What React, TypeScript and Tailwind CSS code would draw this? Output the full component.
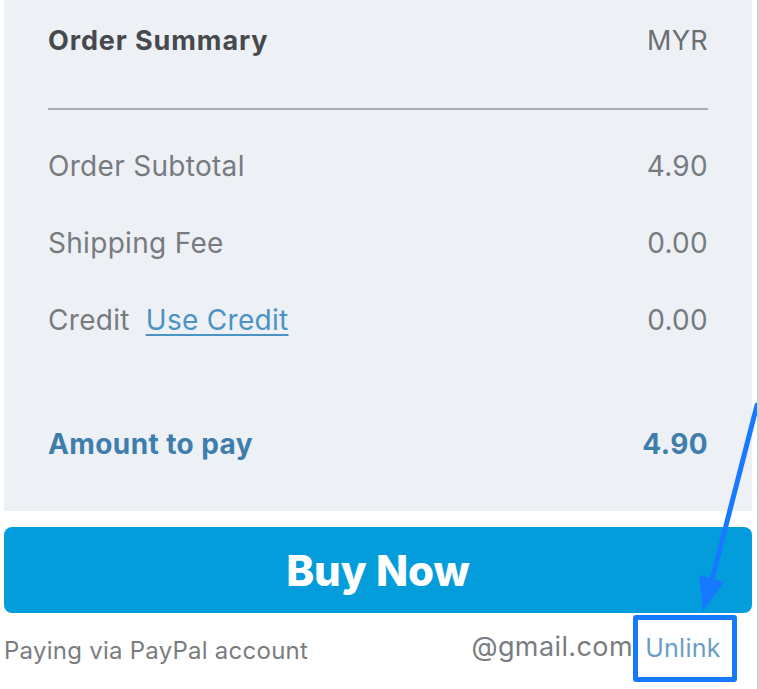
import React from 'react';

const FONT = { fontFamily: '"Inter", "Liberation Sans", sans-serif' };

const Row = ({label, value, extra}: {label: string; value: string; extra?: React.ReactNode}) => (
  <div className="flex h-[77px] items-center justify-between text-[28px] tracking-[0.3px] text-[#777b80]">
    <div className="flex items-center gap-4">
      <span>{label}</span>
      {extra}
    </div>
    <span>{value}</span>
  </div>
);

export default function App() {
  return (
    <div className="relative h-[689px] w-[759px] overflow-hidden border-r-2 border-[#d0d0d0] bg-white" style={FONT}>
      <section className="ml-[4px] flex h-[511px] w-[748px] flex-col bg-[#edf1f6] px-[44px]">
        <div className="flex h-[82px] items-center justify-between">
          <h3 className="text-[27px] font-bold tracking-[0.9px] text-[#46494d]">Order Summary</h3>
          <span className="text-[27px] tracking-[0.3px] text-[#6b6f73]">MYR</span>
        </div>
        <div className="mt-[26px] h-[2px] bg-[#a9acb0]" />
        <div className="mt-[17px]">
          <Row label="Order Subtotal" value="4.90" />
          <Row label="Shipping Fee" value="0.00" />
          <Row
            label="Credit"
            value="0.00"
            extra={<a className="text-[#4a93c4] underline underline-offset-4">Use Credit</a>}
          />
        </div>
        <div className="mt-[47px] flex h-[77px] items-center justify-between text-[28px] font-bold tracking-[0.4px] text-[#3e7eac]">
          <span>Amount to pay</span>
          <span>4.90</span>
        </div>
      </section>

      <button className="ml-[4px] mt-[16px] flex h-[86px] w-[748px] items-center justify-center rounded-[8px] bg-[#049ddc] text-[42px] font-extrabold text-white">
        Buy Now
      </button>

      <div className="flex h-[76px] w-[748px] items-center justify-between pl-[4px] text-[24px] tracking-[0.25px] text-[#7a7d80]">
        <span>Paying via PayPal account</span>
        <div className="-mt-[5px] flex items-center">
          <span className="-mt-[2px] text-[27px] tracking-[0.4px]">@gmail.com</span>
          <span className="mr-[11px] flex h-[67px] w-[104px] items-center justify-center rounded-[3px] border-[5px] border-[#1779ff] pr-[4px] text-[25px] text-[#6c9cc7]">
            Unlink
          </span>
        </div>
      </div>

      <svg className="pointer-events-none absolute left-0 top-0" width="759" height="689" viewBox="0 0 759 689">
        <line x1="757" y1="405" x2="712" y2="580" stroke="#1779ff" strokeWidth="5" strokeLinecap="round" />
        <polygon points="703,612 699,575 724,582" fill="#1779ff" />
      </svg>
    </div>
  );
}
